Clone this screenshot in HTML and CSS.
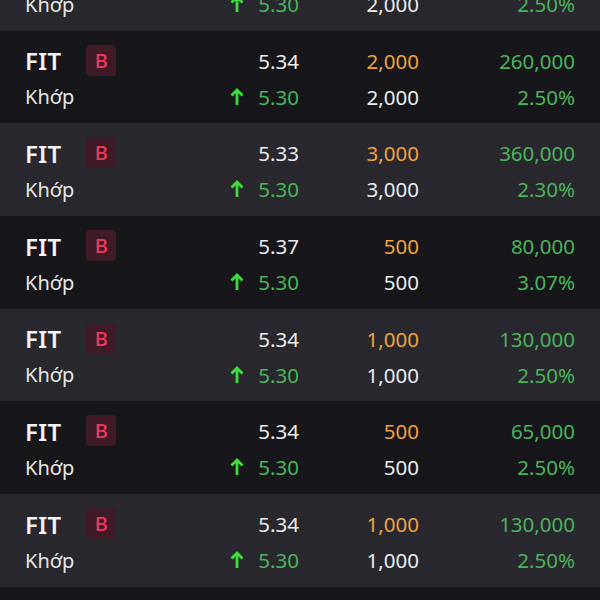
FILE: index.html
```html
<!DOCTYPE html>
<html lang="vi">
<head>
<meta charset="utf-8">
<link rel="stylesheet" href="styles.css">
</head>
<body>
<div class="list">
  <div class="row">
    <div class="name"><span class="sym">FIT</span><span class="badge">B</span></div>
    <div class="num white">5.34</div><div class="num orange">2,000</div><div class="num green">260,000</div>
    <div class="sub">Khớp</div>
    <div class="num green"><svg class="arrow" viewBox="0 0 14 18"><path d="M7 17V2M1.5 7.5L7 2l5.5 5.5"/></svg>5.30</div><div class="num white">2,000</div><div class="num green">2.50%</div>
  </div>
  <div class="row">
    <div class="name"><span class="sym">FIT</span><span class="badge">B</span></div>
    <div class="num white">5.34</div><div class="num orange">2,000</div><div class="num green">260,000</div>
    <div class="sub">Khớp</div>
    <div class="num green"><svg class="arrow" viewBox="0 0 14 18"><path d="M7 17V2M1.5 7.5L7 2l5.5 5.5"/></svg>5.30</div><div class="num white">2,000</div><div class="num green">2.50%</div>
  </div>
  <div class="row">
    <div class="name"><span class="sym">FIT</span><span class="badge">B</span></div>
    <div class="num white">5.33</div><div class="num orange">3,000</div><div class="num green">360,000</div>
    <div class="sub">Khớp</div>
    <div class="num green"><svg class="arrow" viewBox="0 0 14 18"><path d="M7 17V2M1.5 7.5L7 2l5.5 5.5"/></svg>5.30</div><div class="num white">3,000</div><div class="num green">2.30%</div>
  </div>
  <div class="row">
    <div class="name"><span class="sym">FIT</span><span class="badge">B</span></div>
    <div class="num white">5.37</div><div class="num orange">500</div><div class="num green">80,000</div>
    <div class="sub">Khớp</div>
    <div class="num green"><svg class="arrow" viewBox="0 0 14 18"><path d="M7 17V2M1.5 7.5L7 2l5.5 5.5"/></svg>5.30</div><div class="num white">500</div><div class="num green">3.07%</div>
  </div>
  <div class="row">
    <div class="name"><span class="sym">FIT</span><span class="badge">B</span></div>
    <div class="num white">5.34</div><div class="num orange">1,000</div><div class="num green">130,000</div>
    <div class="sub">Khớp</div>
    <div class="num green"><svg class="arrow" viewBox="0 0 14 18"><path d="M7 17V2M1.5 7.5L7 2l5.5 5.5"/></svg>5.30</div><div class="num white">1,000</div><div class="num green">2.50%</div>
  </div>
  <div class="row">
    <div class="name"><span class="sym">FIT</span><span class="badge">B</span></div>
    <div class="num white">5.34</div><div class="num orange">500</div><div class="num green">65,000</div>
    <div class="sub">Khớp</div>
    <div class="num green"><svg class="arrow" viewBox="0 0 14 18"><path d="M7 17V2M1.5 7.5L7 2l5.5 5.5"/></svg>5.30</div><div class="num white">500</div><div class="num green">2.50%</div>
  </div>
  <div class="row">
    <div class="name"><span class="sym">FIT</span><span class="badge">B</span></div>
    <div class="num white">5.34</div><div class="num orange">1,000</div><div class="num green">130,000</div>
    <div class="sub">Khớp</div>
    <div class="num green"><svg class="arrow" viewBox="0 0 14 18"><path d="M7 17V2M1.5 7.5L7 2l5.5 5.5"/></svg>5.30</div><div class="num white">1,000</div><div class="num green">2.50%</div>
  </div>
  <div class="row"></div>
</div>
</body>
</html>
```
FILE: styles.css
```css
html, body {
  margin: 0;
  padding: 0;
  background: #17171b;
  overflow: hidden;
  height: 600px;
}
body {
  font-family: "Noto Sans", "Open Sans", sans-serif;
  color: #ececec;
}
.list {
  margin-top: -62px;
}
.row {
  box-sizing: border-box;
  height: 92.7px;
  padding: 12px 25px 0 25px;
  display: grid;
  grid-template-columns: 1fr 120px 120px 156px;
  grid-template-rows: 36px 36px;
  align-items: center;
}
.row:nth-child(odd) {
  background: #28282e;
}
.row:nth-child(even) {
  background: #17171b;
}
.name {
  display: flex;
  align-items: center;
  gap: 25px;
}
.sym {
  font-size: 24px;
  font-weight: 600;
  color: #f4f4f4;
  letter-spacing: 0.3px;
}
.badge {
  width: 30px;
  height: 31px;
  border-radius: 4px;
  background: #3f1b27;
  color: #ec3a5e;
  font-size: 20px;
  font-weight: 500;
  display: flex;
  align-items: center;
  justify-content: center;
  margin-top: -1px;
}
.sub {
  font-size: 20px;
  color: #e6e6e6;
}
.num {
  font-size: 20.5px;
  text-align: right;
  display: flex;
  justify-content: flex-end;
  align-items: center;
}
.white { color: #ececec; }
.orange { color: #f2a13f; }
.green { color: #4cb35b; }
.arrow {
  width: 14px;
  height: 18px;
  margin-right: 14px;
  fill: none;
  stroke: #3ddc3a;
  stroke-width: 2.8;
}
```
